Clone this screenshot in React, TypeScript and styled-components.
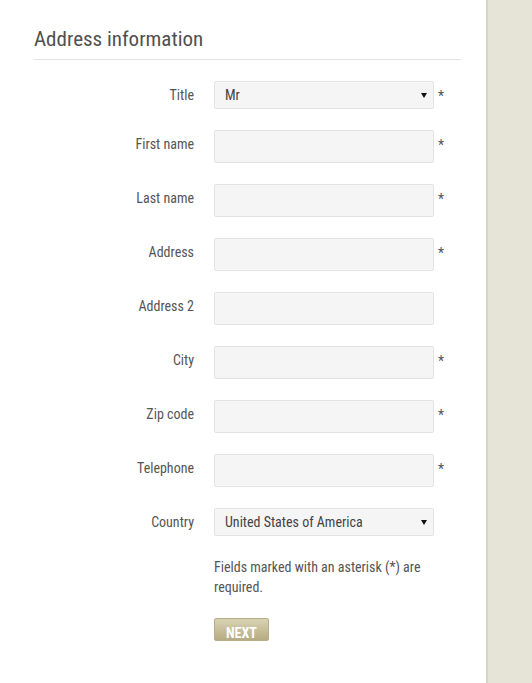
import React from 'react';
import styled, { createGlobalStyle } from 'styled-components';

const GlobalStyle = createGlobalStyle`
  html, body {
    margin: 0;
    padding: 0;
    background: #fff;
  }
  body {
    font-family: "Roboto Condensed", "Liberation Sans Narrow", "Liberation Sans", Arial, sans-serif;
    color: #555;
  }
  * {
    box-sizing: border-box;
  }
`;

const Page = styled.div`
  display: flex;
  min-height: 100vh;
`;

const Main = styled.main`
  flex: 0 0 486px;
  padding: 0 25px 40px 34px;
`;

const Sidebar = styled.aside`
  flex: 1;
  background: #e6e3d7;
  border-left: 2px solid #d8d5c8;
`;

const Heading = styled.h2`
  margin: 0;
  padding: 27px 0 7px;
  font-size: 21px;
  line-height: 1.2;
  font-weight: normal;
  color: #505050;
  border-bottom: 1px solid #e2e2e2;
`;

const Form = styled.form`
  margin-top: 21px;
  display: flex;
  flex-direction: column;
  gap: 21px;
`;

const Row = styled.div`
  display: flex;
  align-items: flex-start;
`;

const Label = styled.label`
  flex: 0 0 160px;
  margin-right: 20px;
  padding-top: 4px;
  text-align: right;
  font-size: 14px;
  line-height: 20px;
  color: #555;
`;

const Field = styled.input`
  width: 220px;
  height: 33px;
  padding: 0 10px;
  background: #f5f5f5;
  border: 1px solid #e3e3e3;
  border-radius: 2px;
  font: inherit;
  font-size: 14px;
  color: #333;
  outline: none;
`;

const SelectWrap = styled.div`
  position: relative;
  width: 220px;
  height: 28px;

  &::after {
    content: "";
    position: absolute;
    right: 7px;
    top: 12px;
    border-left: 3px solid transparent;
    border-right: 3px solid transparent;
    border-top: 5px solid #111;
    pointer-events: none;
  }
`;

const Select = styled.select`
  appearance: none;
  -webkit-appearance: none;
  width: 100%;
  height: 28px;
  padding: 0 20px 0 10px;
  background: #f5f5f5;
  border: 1px solid #e3e3e3;
  border-radius: 2px;
  font: inherit;
  font-size: 14px;
  color: #444;
  outline: none;
`;

const Required = styled.span`
  margin-left: 4px;
  padding-top: 5px;
  font-size: 14px;
  line-height: 20px;
  color: #555;
`;

const Note = styled.p`
  margin: 0 0 0 180px;
  width: 220px;
  font-size: 14px;
  line-height: 20px;
  color: #555;
`;

const Actions = styled.div`
  margin: 0 0 0 180px;
`;

const NextButton = styled.button`
  height: 23px;
  padding: 7px 11px 0;
  border: 1px solid #b7ad86;
  border-radius: 2px;
  background: linear-gradient(to bottom, #d9d3b4 0%, #b6ac82 100%);
  color: #fff;
  font: inherit;
  font-size: 14px;
  font-weight: bold;
  line-height: 15px;
  cursor: pointer;
`;

type FieldRow = { label: string; required: boolean };

const fields: FieldRow[] = [
  { label: 'First name', required: true },
  { label: 'Last name', required: true },
  { label: 'Address', required: true },
  { label: 'Address 2', required: false },
  { label: 'City', required: true },
  { label: 'Zip code', required: true },
  { label: 'Telephone', required: true },
];

const App = () => {
  return (
    <>
      <GlobalStyle />
      <Page>
        <Main>
          <Heading>Address information</Heading>
          <Form onSubmit={(e) => e.preventDefault()}>
            <Row>
              <Label>Title</Label>
              <SelectWrap>
                <Select defaultValue="Mr">
                  <option>Mr</option>
                  <option>Mrs</option>
                  <option>Ms</option>
                </Select>
              </SelectWrap>
              <Required>*</Required>
            </Row>

            {fields.map((f) => (
              <Row key={f.label}>
                <Label>{f.label}</Label>
                <Field type="text" />
                {f.required && <Required>*</Required>}
              </Row>
            ))}

            <Row>
              <Label>Country</Label>
              <SelectWrap>
                <Select defaultValue="United States of America">
                  <option>United States of America</option>
                  <option>Canada</option>
                  <option>United Kingdom</option>
                </Select>
              </SelectWrap>
            </Row>

            <Note>Fields marked with an asterisk (*) are required.</Note>

            <Actions>
              <NextButton type="submit">NEXT</NextButton>
            </Actions>
          </Form>
        </Main>
        <Sidebar />
      </Page>
    </>
  );
};

export default App;
